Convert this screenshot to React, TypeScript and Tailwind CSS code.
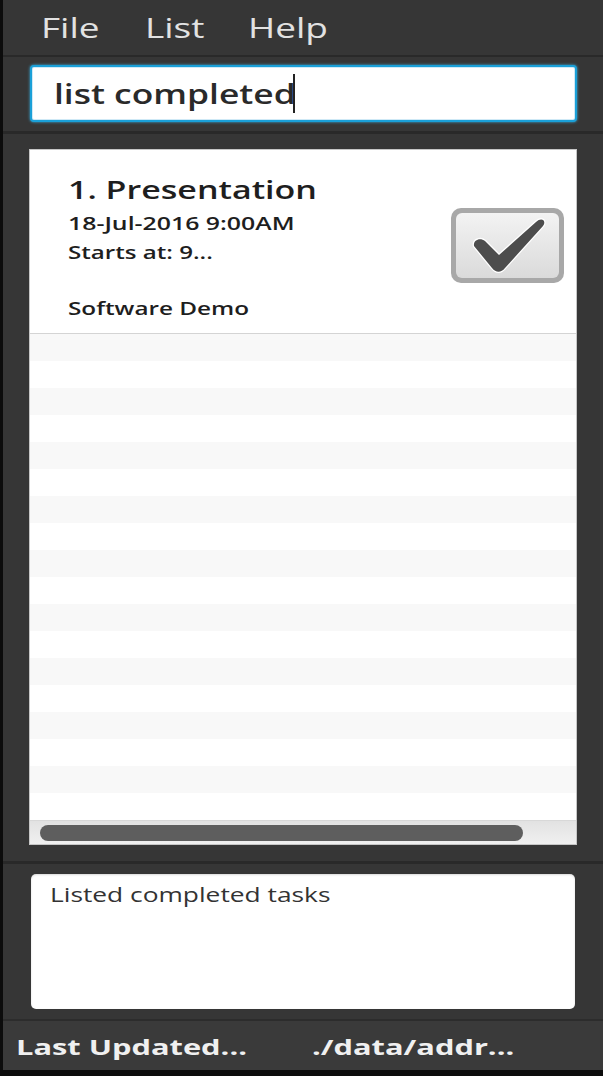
import React from "react";

const font = { fontFamily: '"Open Sans", "Noto Sans", sans-serif' };

function Wide({ w, s, children }: { w: string; s: string; children: React.ReactNode }) {
  return (
    <span className={`inline-block whitespace-nowrap ${w}`}>
      <span className={`inline-block origin-left ${s}`}>{children}</span>
    </span>
  );
}

function CheckBox() {
  return (
    <div className="relative w-[113px] h-[75px] rounded-[10px] bg-[#a8a8a8] p-[5px]">
      <div className="w-full h-full rounded-[6px] bg-gradient-to-b from-[#f3f3f3] to-[#dadada]" />
      <svg className="absolute left-0 top-0" width="113" height="75" viewBox="0 0 113 75">
        <path
          d="M23 38 C22 32, 29 29, 34 33 L48 47 L85 14 C90 9, 96 12, 92 18 L54 60 C50 65, 45 65, 41 60 Z"
          fill="#4d4d4d"
          stroke="#ffffff"
          strokeWidth="2.5"
          strokeLinejoin="round"
          style={{ paintOrder: "stroke" }}
        />
      </svg>
    </div>
  );
}

export default function App() {
  const rows = Array.from({ length: 18 });
  return (
    <div className="w-[603px] h-[1076px] bg-[#363636] flex overflow-hidden" style={font}>
      <div className="w-[3px] h-full bg-[#0c0c0c]" />
      <div className="flex-1 flex flex-col min-w-0">
        {/* menu */}
        <div className="h-[55px] flex items-center pl-[38px] text-[28px] text-[#e2e2e2] leading-none">
          <Wide w="w-[104px]" s="scale-x-[1.32]">File</Wide>
          <Wide w="w-[103px]" s="scale-x-[1.32]">List</Wide>
          <Wide w="w-[90px]" s="scale-x-[1.32]">Help</Wide>
        </div>
        <div className="h-[2px] bg-[#292929]" />
        {/* command box */}
        <div className="h-[75px] pl-[27px] pr-[26px] pt-[8px]">
          <div className="h-[57px] rounded-[4px] border-2 border-[#1aa0d8] bg-white shadow-[0_0_3px_#3ab4e6] ring-1 ring-inset ring-[#cfe9f6] flex items-center pl-[22px]">
            <span className="text-[27px] font-semibold text-[#2a2a2a] leading-none">
              <Wide w="w-[239px]" s="scale-x-[1.31]">list completed</Wide>
            </span>
            <span className="w-[2px] h-[39px] bg-[#222]" />
          </div>
        </div>
        <div className="h-[3px] bg-[#292929]" />
        {/* list */}
        <div className="flex-1 pt-[15px] pb-[16px] pl-[26px] pr-[26px] flex flex-col">
          <div className="flex-1 border border-[#c6c6c6] bg-white flex flex-col overflow-hidden">
            <div className="h-[184px] shrink-0 border-b border-[#d4d4d4] flex items-start pl-[38px] pr-[12px]">
              <div className="flex-1 pt-[22px] text-[#1e1e1e]">
                <div className="text-[25px] font-semibold leading-[34px]">
                  <Wide w="w-[250px]" s="scale-x-[1.36]">1. Presentation</Wide>
                </div>
                <div className="text-[18px] font-semibold leading-[24px] mt-[5px]">
                  <Wide w="w-[230px]" s="scale-x-[1.38]">18-Jul-2016 9:00AM</Wide>
                </div>
                <div className="text-[18px] font-semibold leading-[24px] mt-[5px]">
                  <Wide w="w-[150px]" s="scale-x-[1.34]">Starts at: 9...</Wide>
                </div>
                <div className="text-[18px] font-semibold leading-[24px] mt-[32px]">
                  <Wide w="w-[185px]" s="scale-x-[1.35]">Software Demo</Wide>
                </div>
              </div>
              <div className="pt-[58px]">
                <CheckBox />
              </div>
            </div>
            <div className="flex-1 overflow-hidden">
              {rows.map((_, i) => (
                <div key={i} className={`h-[27px] ${i % 2 === 0 ? "bg-[#f8f8f8]" : "bg-white"}`} />
              ))}
            </div>
            <div className="h-[24px] shrink-0 bg-gradient-to-b from-[#e2e2e2] to-[#f0f0f0] border-t border-[#d8d8d8] flex items-center pl-[10px]">
              <div className="w-[483px] h-[16px] rounded-full bg-[#5e5e5e]" />
            </div>
          </div>
        </div>
        <div className="h-[3px] bg-[#292929]" />
        {/* result */}
        <div className="h-[155px] pt-[10px] pb-[10px] pl-[28px] pr-[28px]">
          <div className="h-[135px] rounded-[5px] bg-white shadow-[inset_0_1px_2px_rgba(0,0,0,0.15)] pl-[19px] pt-[8px]">
            <span className="text-[19.5px] text-[#333] leading-[26px]">
              <Wide w="w-[285px]" s="scale-x-[1.35]">Listed completed tasks</Wide>
            </span>
          </div>
        </div>
        <div className="h-[2px] bg-[#2c2c2c]" />
        {/* status */}
        <div className="h-[49px] bg-[#3a3a3a] flex items-center text-[22px] font-bold text-[#f0f0f0] leading-none">
          <span className="pl-[13px] w-[309px]">
            <Wide w="w-[235px]" s="scale-x-[1.4]">Last Updated...</Wide>
          </span>
          <Wide w="w-[210px]" s="scale-x-[1.4]">./data/addr...</Wide>
        </div>
        <div className="h-[6px] bg-[#0c0c0c]" />
      </div>
    </div>
  );
}
